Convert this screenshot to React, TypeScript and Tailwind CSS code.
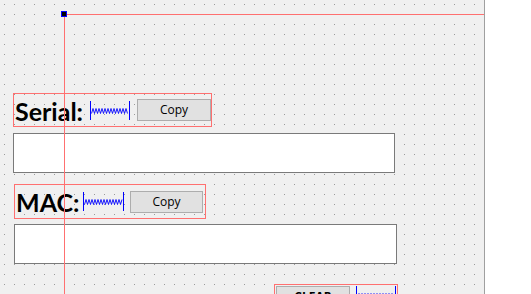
import React from "react";

function Spacer({ w }: { w: number }) {
    const pts: string[] = [];
    for (let x = 1.5, i = 0; x < w - 1.5; x += 1.5, i++) {
        pts.push(`${x},${i % 2 === 0 ? 12.5 : 7.5}`);
    }
    return (
        <svg width={w} height={19} className="block shrink-0">
            <line x1={0.5} y1={0} x2={0.5} y2={19} stroke="#0000ff" strokeWidth={1} />
            <line x1={w - 0.5} y1={0} x2={w - 0.5} y2={19} stroke="#0000ff" strokeWidth={1} />
            <polyline points={pts.join(" ")} fill="none" stroke="#0000ff" strokeWidth={0.9} />
        </svg>
    );
}

function CopyButton({ w }: { w: string }) {
    return (
        <button
            className={`flex h-[22px] ${w} shrink-0 items-center justify-center border border-[#adadad] bg-[#e1e1e1] text-[12px] text-black`}
            style={{ fontFamily: '"Open Sans", "Noto Sans", sans-serif' }}
        >
            Copy
        </button>
    );
}

export default function App() {
    return (
        <div className="relative h-[294px] w-[485px] overflow-hidden border-r border-[#a0a0a0] bg-[#f0f0f0]">

            {/* designer grid */}
            <svg className="absolute inset-0" width="484" height="294">
                <defs>
                    <pattern id="dots" width="10" height="10" patternUnits="userSpaceOnUse">
                        <rect x="4" y="4" width="1" height="1" fill="#9a9a9a" />
                    </pattern>
                </defs>
                <rect width="484" height="294" fill="url(#dots)" />
            </svg>

            <div
                className="relative flex flex-col pt-[93px]"
                style={{ fontFamily: 'Lato, "Open Sans", sans-serif' }}
            >

                <div className="ml-[13px] flex h-[34px] w-[199px] items-center border border-[#ff7070]">
                    <div className="w-[76px] shrink-0 pl-[1px] pt-[2px] text-[25px] font-bold leading-none text-black">
                        Serial:
                    </div>
                    <Spacer w={40} />
                    <div className="ml-[7px]">
                        <CopyButton w="w-[74px]" />
                    </div>
                </div>

                <div className="ml-[13px] mt-[6px] h-[40px] w-[382px] border border-[#7a7a7a] bg-white" />

                <div className="ml-[14px] mt-[11px] flex h-[35px] w-[192px] items-center border border-[#ff7070]">
                    <div className="w-[68px] shrink-0 pl-[1px] pt-[2px] text-[25px] font-bold leading-none text-black">
                        MAC:
                    </div>
                    <Spacer w={41} />
                    <div className="ml-[6px]">
                        <CopyButton w="w-[73px]" />
                    </div>
                </div>

                <div className="ml-[14px] mt-[5px] h-[40px] w-[383px] border border-[#7a7a7a] bg-white" />

                <div className="ml-[274px] mt-[20px] flex h-[30px] w-[124px] items-start border border-[#ff7070] pl-[1px] pt-[1px]">
                    <button
                        className="flex h-[22px] w-[74px] shrink-0 items-center justify-center border border-[#adadad] bg-[#e1e1e1] text-[12px] font-bold text-black"
                        style={{ fontFamily: '"Open Sans", "Noto Sans", sans-serif' }}
                    >
                        CLEAR
                    </button>
                    <div className="ml-[6px]">
                        <Spacer w={40} />
                    </div>
                </div>
            </div>

            {/* selection guides */}
            <div className="absolute left-[64px] right-0 top-[14px] h-px bg-[#ff7070]" />
            <div className="absolute bottom-0 left-[64px] top-[14px] w-px bg-[#ff7070]" />
            <div className="absolute left-[61px] top-[11px] h-[6px] w-[6px] border border-[#0000ff] bg-black" />
        </div>
    );
}
